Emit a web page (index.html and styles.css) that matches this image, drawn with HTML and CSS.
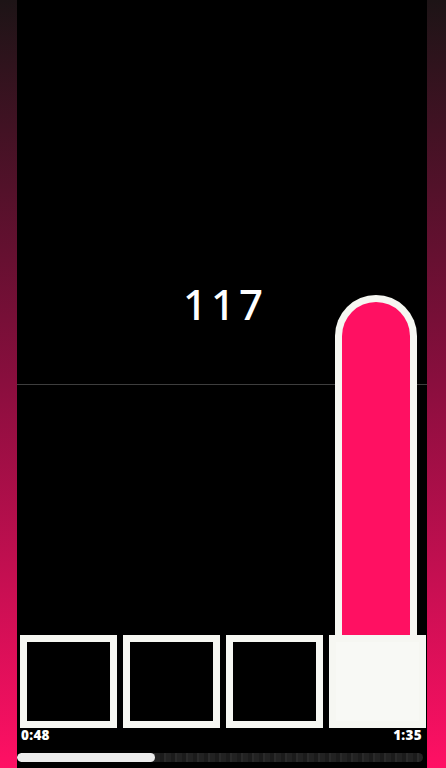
FILE: index.html
```html
<!DOCTYPE html>
<html>
<head>
<meta charset="utf-8">
<link rel="stylesheet" href="styles.css">
</head>
<body>
<div class="screen">
  <div class="side side-left"></div>
  <main class="main">
    <div class="stage">
      <div class="guide"></div>
      <div class="value">117</div>
      <div class="bars">
        <div class="col"></div>
        <div class="col"></div>
        <div class="col"></div>
        <div class="col"><div class="pill"></div></div>
      </div>
    </div>
    <div class="boxes">
      <div class="box"></div>
      <div class="box"></div>
      <div class="box"></div>
      <div class="box filled"></div>
    </div>
    <div class="times">
      <span>0:48</span>
      <span>1:35</span>
    </div>
    <div class="progress">
      <div class="progress-fill"></div>
    </div>
  </main>
  <div class="side side-right"></div>
</div>
</body>
</html>
```
FILE: styles.css
```css
html, body {
  margin: 0;
  padding: 0;
  background: #000;
}
.screen {
  display: flex;
  width: 446px;
  height: 768px;
  overflow: hidden;
}
.side {
  height: 768px;
  background: linear-gradient(to bottom, #1d1416 0%, #8a0e3e 50%, #ff1064 100%);
}
.side-left { width: 17px; }
.side-right { width: 19px; }
.main {
  width: 410px;
  background: #000;
  display: flex;
  flex-direction: column;
}
.stage {
  position: relative;
  height: 635px;
}
.guide {
  position: absolute;
  left: 0;
  right: 0;
  top: 384px;
  height: 1px;
  background: #3e3e3e;
}
.value {
  position: absolute;
  left: 0;
  right: 0;
  top: 275px;
  text-align: center;
  color: #fff;
  font-family: "Noto Sans", sans-serif;
  font-weight: 500;
  font-size: 42px;
  line-height: 58px;
  letter-spacing: 4px;
  text-indent: 6px;
}
.bars {
  position: relative;
  height: 100%;
  display: grid;
  grid-template-columns: repeat(4, 97px);
  column-gap: 6px;
  padding-left: 3px;
  align-items: end;
}
.col {
  display: flex;
  justify-content: center;
}
.pill {
  width: 68px;
  height: 333px;
  margin-left: -3px;
  background: #ff1062;
  border: 7px solid #f6f7f2;
  border-bottom: none;
  border-radius: 41px 41px 0 0;
}
.boxes {
  display: grid;
  grid-template-columns: repeat(4, 97px);
  column-gap: 6px;
  padding-left: 3px;
  height: 93px;
}
.box {
  box-sizing: border-box;
  border: 7px solid #f6f7f2;
  background: #000;
}
.box.filled {
  background: #f8f9f5;
}
.times {
  display: flex;
  justify-content: space-between;
  padding: 0 5px 0 4px;
  height: 25px;
  color: #fff;
  font-family: "Open Sans", sans-serif;
  font-weight: 800;
  font-size: 13.5px;
  line-height: 15px;
  letter-spacing: 0.3px;
}
.progress {
  width: 406px;
  height: 9px;
  border-radius: 5px;
  background: repeating-linear-gradient(to right, #1b1b1b 0px, #1b1b1b 4px, #2a2a2a 4px, #2a2a2a 6px, #222 6px, #222 11px);
  overflow: hidden;
}
.progress-fill {
  width: 138px;
  height: 9px;
  border-radius: 5px;
  background: #ececec;
}
```
